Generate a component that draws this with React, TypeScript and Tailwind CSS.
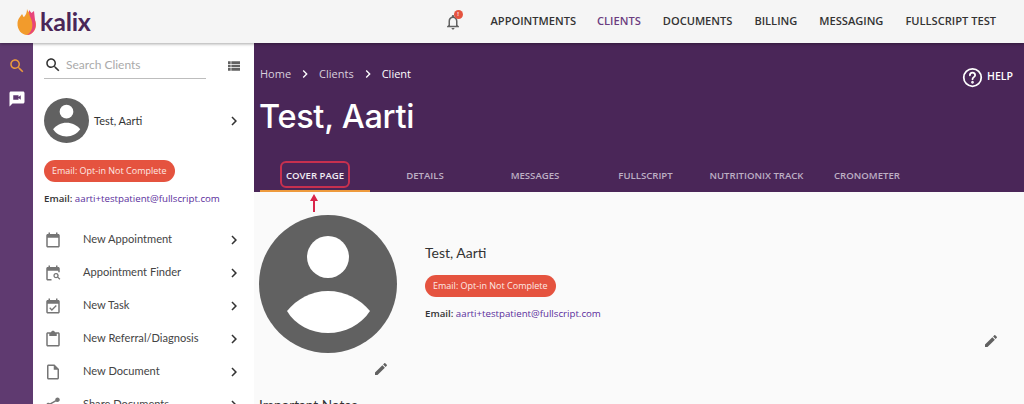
import React from "react";

const P = ({ d, className = "" }: { d: string; className?: string }) => (
  <svg viewBox="0 0 24 24" className={className} fill="currentColor"><path d={d} /></svg>
);

const SEARCH = "M15.5 14h-.79l-.28-.27C15.41 12.59 16 11.11 16 9.5 16 5.91 13.09 3 9.5 3S3 5.91 3 9.5 5.91 16 9.5 16c1.61 0 3.09-.59 4.23-1.57l.27.28v.79l5 4.99L20.49 19l-4.99-5zm-6 0C7.01 14 5 11.99 5 9.5S7.01 5 9.5 5 14 7.01 14 9.5 11.99 14 9.5 14z";
const PENCIL = "M3 17.25V21h3.75L17.81 9.94l-3.75-3.75L3 17.25zM20.71 7.04c.39-.39.39-1.02 0-1.41l-2.34-2.34c-.39-.39-1.02-.39-1.41 0l-1.83 1.83 3.75 3.75 1.83-1.83z";
const CHEV = "M10 6L8.59 7.41 13.17 12l-4.58 4.59L10 18l6-6z";

const Avatar = ({ className }: { className: string }) => (
  <svg viewBox="0 0 138 138" className={className}>
    <circle cx="69" cy="69" r="69" fill="#616161" />
    <circle cx="69" cy="42" r="21" fill="#fff" />
    <path d="M28 96C38 84 52 76 69 76s32 8 42 20c-9 14-25 22-42 22s-33-8-41-22z" fill="#fff" />
  </svg>
);

const ic = "w-[18px] h-[18px]";
const menu: [string, React.ReactNode][] = [
  ["New Appointment", <P className={ic} d="M19 4h-1V2h-2v2H8V2H6v2H5C3.900 4 3 4.900 3 6v14c0 1.100.9 2 2 2h14c1.100 0 2-.9 2-2V6c0-1.100-.9-2-2-2zm0 16H5V9h14v11z" />],
  ["Appointment Finder", <svg viewBox="0 0 24 24" className={ic} fill="currentColor"><path d="M19 4h-1V2h-2v2H8V2H6v2H5C3.900 4 3 4.900 3 6v14c0 1.100.9 2 2 2h5v-2H5V9h14v2h2V6c0-1.100-.9-2-2-2z" /><path d="M16 12a3.500 3.500 0 1 0 2 6.400l2.600 2.600 1.200-1.200-2.600-2.600A3.500 3.500 0 0 0 16 12zm0 1.700a1.800 1.800 0 1 1 0 3.600 1.800 1.800 0 0 1 0-3.600z" /></svg>],
  ["New Task", <P className={ic} d="M19 4h-1V2h-2v2H8V2H6v2H5C3.900 4 3 4.900 3 6v14c0 1.100.9 2 2 2h14c1.100 0 2-.9 2-2V6c0-1.100-.9-2-2-2zm0 16H5V9h14v11zm-8.500-1.500L7 15l1.200-1.200 2.300 2.300 5.300-5.300L17 12l-6.500 6.500z" />],
  ["New Referral/Diagnosis", <P className={ic} d="M19 3h-4.200C14.400 1.800 13.300 1 12 1s-2.400.8-2.800 2H5c-1.100 0-2 .9-2 2v15c0 1.100.9 2 2 2h14c1.100 0 2-.9 2-2V5c0-1.100-.9-2-2-2zm0 17H5V5h2v3h10V5h2v15z" />],
  ["New Document", <P className={ic} d="M14 2H6c-1.100 0-2 .9-2 2v16c0 1.100.9 2 2 2h12c1.100 0 2-.9 2-2V8l-6-6zm4 18H6V4h7v5h5v11z" />],
  ["Share Documents", <P className={ic} d="M18 16c-.8 0-1.400.3-2 .8l-7.100-4.200c.1-.2.1-.4.1-.6s0-.4-.1-.6L16 7.200c.5.5 1.200.8 2 .8 1.700 0 3-1.300 3-3s-1.300-3-3-3-3 1.300-3 3c0 .2 0 .4.100.6L8 9.800C7.500 9.300 6.800 9 6 9c-1.700 0-3 1.300-3 3s1.300 3 3 3c.8 0 1.500-.3 2-.8l7.100 4.200c-.1.200-.1.400-.1.600 0 1.600 1.300 3 3 3s3-1.400 3-3-1.300-3-3-3z" />],
];

const tabs: [string, string][] = [
  ["DETAILS", "w-[110px]"],
  ["MESSAGES", "w-[110px]"],
  ["FULLSCRIPT", "w-[111px]"],
  ["NUTRITIONIX TRACK", "w-[111px]"],
  ["CRONOMETER", "w-[110px]"],
];

const Pill = () => (
  <span className="inline-flex h-[22px] items-center rounded-full bg-[#e5533f] px-[8px] font-['Open_Sans',sans-serif] text-[9px] text-[#fde9e5]">
    Email: Opt-in Not Complete
  </span>
);

const EmailLine = () => (
  <p className="font-['Open_Sans',sans-serif] text-[9.7px] leading-[14px] text-[#333]">
    <span className="font-semibold">Email:</span> <span className="text-[#5a2d9c]">aarti+testpatient@fullscript.com</span>
  </p>
);

export default function App() {
  return (
    <div className="relative flex h-[404px] w-[1024px] flex-col overflow-hidden bg-[#fafafa]">
      <header className="relative z-10 flex h-[43px] shrink-0 items-center bg-[#f5f5f5] pl-[17px] pr-[28px] shadow-[0_1px_3px_rgba(0,0,0,0.35)]">
        <svg viewBox="0 0 20 28" className="h-[28px] w-[20px]">
          <path d="M10 1c1 4 8 7 9 15 .5 6-4 11-9 11S0 22 .5 15C1 10 4 8 5 6c1 1 1 3 2 3 2-2 3-5 3-8z" fill="#f29b2c" />
          <path d="M12 2l2.500 3L17 3l1 9c1.500 5 .5 10-3 13-2 1.500-4 2-5 2 5-3 6.500-9 4.500-15-1-3-3-6-2.500-10z" fill="#e8457a" />
        </svg>
        <span className="ml-[3px] font-['Lato',sans-serif] text-[25px] font-bold leading-none tracking-[-0.2px] text-[#4a2658]">kalix</span>
        <div className="ml-auto flex items-center font-['Open_Sans',sans-serif] text-[11.1px] font-semibold text-[#333]">
          <div className="relative mr-[29px] text-[#616161]">
            <svg viewBox="0 0 24 24" className="h-[18px] w-[18px]" fill="currentColor"><path d="M12 22c1.100 0 2-.9 2-2h-4c0 1.100.9 2 2 2zm6-6v-5c0-3.100-1.600-5.600-4.500-6.300V4c0-.8-.7-1.500-1.500-1.500s-1.500.7-1.500 1.500v.7C7.600 5.400 6 7.900 6 11v5l-2 2v1h16v-1l-2-2zm-2 1H8v-6c0-2.500 1.500-4.500 4-4.500s4 2 4 4.500v6z" /></svg>
            <span className="absolute -right-[1px] -top-[3px] flex h-[9px] w-[9px] items-center justify-center rounded-full bg-[#e5533f] text-[6px] leading-none text-white">!</span>
          </div>
          <span>APPOINTMENTS</span>
          <span className="ml-[21px] text-[#6b3d80]">CLIENTS</span>
          <span className="ml-[22px]">DOCUMENTS</span>
          <span className="ml-[22px]">BILLING</span>
          <span className="ml-[22px]">MESSAGING</span>
          <span className="ml-[22px]">FULLSCRIPT TEST</span>
        </div>
      </header>

      <div className="flex min-h-0 flex-1">
        <aside className="flex w-[33px] shrink-0 flex-col items-center bg-[#5f3a70] pt-[14px]">
          <P className="h-[18px] w-[18px] text-[#eb9a3c]" d={SEARCH} />
          <svg viewBox="0 0 24 24" className="mt-[15px] h-[18px] w-[18px] text-white" fill="currentColor"><path d="M20 2H4c-1.100 0-2 .9-2 2v18l4-4h14c1.100 0 2-.9 2-2V4c0-1.100-.9-2-2-2zm-3 11l-3-2.400V13H7V7h7v2.400L17 7v6z" /></svg>
        </aside>

        <nav className="w-[221px] shrink-0 bg-white pl-[11px] pr-[11px] pt-[9px]">
          <div className="flex items-center">
            <div className="flex h-[27px] w-[162px] items-center border-b border-[#bdbdbd]">
              <P className="h-[18px] w-[18px] text-[#333]" d={SEARCH} />
              <span className="ml-[4px] font-['Lato',sans-serif] text-[12px] text-[#aaa]">Search Clients</span>
            </div>
            <svg viewBox="0 0 24 24" className="ml-auto mr-[1px] h-[16px] w-[16px] text-[#616161]" fill="currentColor"><path d="M3 5h4v4H3zm5 0h13v4H8zM3 10h4v4H3zm5 0h13v4H8zM3 15h4v4H3zm5 0h13v4H8z" /></svg>
          </div>
          <div className="mt-[19px] flex items-center">
            <Avatar className="h-[45px] w-[45px]" />
            <span className="ml-[5px] pt-[1px] font-['Lato',sans-serif] text-[11px] text-[#333]">Test, Aarti</span>
            <P className="ml-auto h-[18px] w-[18px] text-[#333]" d={CHEV} />
          </div>
          <div className="mt-[17px] flex"><Pill /></div>
          <div className="mt-[10px]"><EmailLine /></div>
          <ul className="mt-[17px] font-['Lato',sans-serif] text-[11.1px] text-[#444]">
            {menu.map(([label, icon]) => (
              <li key={label} className="flex h-[33px] items-center">
                <span className="flex w-[39px] text-[#757575]">{icon}</span>
                <span>{label}</span>
                <P className="ml-auto h-[18px] w-[18px] text-[#333]" d={CHEV} />
              </li>
            ))}
          </ul>
        </nav>

        <main className="min-w-0 flex-1">
          <section className="relative h-[149px] bg-[#4a2658] pl-[6px]">
            <div className="flex h-[61px] items-center gap-[6px] pt-[1px] font-['Open_Sans',sans-serif] text-[11px] text-[#d9d0dd]">
              <span>Home</span>
              <P className="h-[16px] w-[16px] text-white" d={CHEV} />
              <span>Clients</span>
              <P className="h-[16px] w-[16px] text-white" d={CHEV} />
              <span className="font-medium text-white">Client</span>
              <div className="ml-auto mr-[11px] mt-[6px] flex items-center gap-[4px] text-[10.5px] font-semibold text-white">
                <svg viewBox="0 0 24 24" className="h-[21px] w-[21px]" fill="none" stroke="currentColor" strokeWidth="2"><circle cx="12" cy="12" r="10" /><path d="M9 9.500a3 3 0 0 1 6 0c0 2-3 2.300-3 4.500" strokeLinecap="round" /><circle cx="12" cy="17.500" r="0.600" fill="currentColor" /></svg>
                HELP
              </div>
            </div>
            <h1 className="-ml-[1px] font-['Inter',sans-serif] text-[32.5px] font-medium leading-[26px] tracking-[-0.3px] text-white">Test, Aarti</h1>
            <div className="mt-[32px] flex font-['Open_Sans',sans-serif] text-[9.6px] font-semibold text-[#bdafc4]">
              <div className="flex h-[30px] w-[110px] items-center justify-center border-b-2 border-[#ee9a3d] text-[#f1ecf3]">COVER PAGE</div>
              {tabs.map(([t, w]) => (
                <div key={t} className={`flex h-[30px] items-center justify-center pb-[2px] ${w}`}>{t}</div>
              ))}
            </div>
            <div className="absolute left-[26px] top-[118px] h-[27px] w-[70px] rounded-[6px] border-2 border-[#c8304f]" />
          </section>
          <svg viewBox="0 0 10 18" className="absolute left-[309px] top-[194px] h-[18px] w-[10px] text-[#d9254a]" fill="currentColor"><path d="M5 0l4 7H6v11H4V7H1z" /></svg>

          <div className="flex pl-[5px] pt-[23px]">
            <div className="w-[140px] shrink-0">
              <Avatar className="h-[138px] w-[138px]" />
              <P className="ml-[114px] mt-[8px] h-[16px] w-[16px] text-[#616161]" d={PENCIL} />
              <p className="mt-[18px] whitespace-nowrap font-['Lato',sans-serif] text-[13.6px] leading-[20px] text-[#333]">Important Notes</p>
            </div>
            <div className="min-w-0 flex-1 pl-[26px] pt-[28px]">
              <p className="font-['Lato',sans-serif] text-[14px] leading-[20px] text-[#333]">Test, Aarti</p>
              <div className="mt-[12px] flex"><Pill /></div>
              <div className="mt-[10px]"><EmailLine /></div>
              <div className="mr-[25px] mt-[12px] flex justify-end">
                <P className="h-[16px] w-[16px] text-[#616161]" d={PENCIL} />
              </div>
            </div>
          </div>
        </main>
      </div>
    </div>
  );
}
